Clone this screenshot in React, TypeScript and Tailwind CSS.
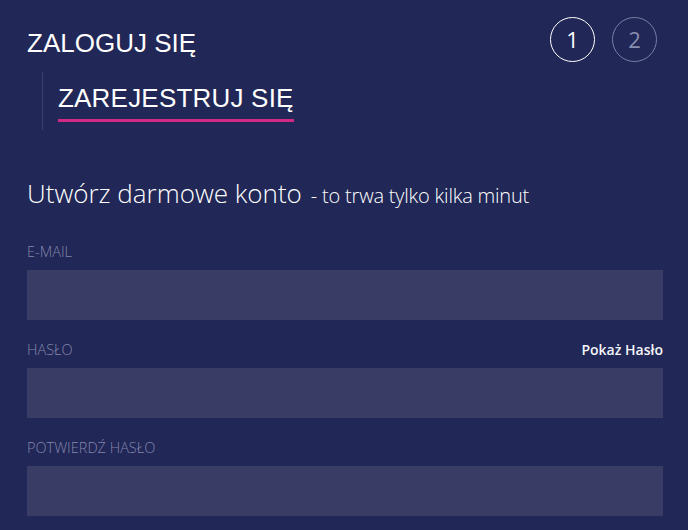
import React, { useState } from "react";

const fields = [
  { id: "email", label: "E-MAIL", type: "email" },
  { id: "password", label: "HASŁO", type: "password", toggle: true },
  { id: "confirm", label: "POTWIERDŹ HASŁO", type: "password" },
];

export default function App() {
  const [showPassword, setShowPassword] = useState(false);

  return (
    <div className="min-h-screen bg-[#212756] px-[27px] font-['Open_Sans',sans-serif] text-white">
      {/* Header: tabs + steps */}
      <div className="flex items-start justify-between pt-[17px]">
        <div className="pt-[11px]">
          <div className="font-['Liberation_Sans',Arial,sans-serif] text-[26px] leading-[30px] text-white">
            ZALOGUJ SIĘ
          </div>
          <div className="ml-[15px] mt-[14px] border-l border-[#393e6b] pb-[8px] pl-[15px] pt-[11px]">
            <div className="inline-block">
              <div className="font-['Liberation_Sans',Arial,sans-serif] text-[26px] leading-[30px] tracking-[0.2px] text-white">
                ZAREJESTRUJ SIĘ
              </div>
              <div className="mt-[6px] h-[3px] bg-[#d12a84]" />
            </div>
          </div>
        </div>

        <div className="mr-[4px] flex gap-[17px]">
          <div className="flex h-[45px] w-[45px] items-center justify-center rounded-full border border-white text-[22px] text-white">
            1
          </div>
          <div className="flex h-[45px] w-[45px] items-center justify-center rounded-full border border-[#7a7ea6] text-[22px] text-[#8a8db2]">
            2
          </div>
        </div>
      </div>

      {/* Title */}
      <div className="mt-[46px] flex items-baseline gap-[9px] whitespace-nowrap">
        <span className="text-[26px] font-light leading-[34px] text-white">
          Utwórz darmowe konto
        </span>
        <span className="text-[20px] font-light leading-[34px] tracking-[-0.2px] text-white">
          - to trwa tylko kilka minut
        </span>
      </div>

      {/* Form */}
      <form className="mt-[29px] flex flex-col gap-[20px]">
        {fields.map((f) => (
          <div key={f.id} className="w-[636px]">
            <div className="mb-[8px] flex items-center justify-between">
              <label
                htmlFor={f.id}
                className="text-[14.5px] font-light leading-[20px] text-[#8286ab]"
              >
                {f.label}
              </label>
              {f.toggle && (
                <button
                  type="button"
                  onClick={() => setShowPassword((s) => !s)}
                  className="text-[14px] font-semibold leading-[20px] text-[#f4f5fa]"
                >
                  Pokaż Hasło
                </button>
              )}
            </div>
            <input
              id={f.id}
              type={f.type === "password" && showPassword ? "text" : f.type}
              className="block h-[50px] w-full bg-[#393d66] px-4 text-white outline-none"
            />
          </div>
        ))}
      </form>
    </div>
  );
}
